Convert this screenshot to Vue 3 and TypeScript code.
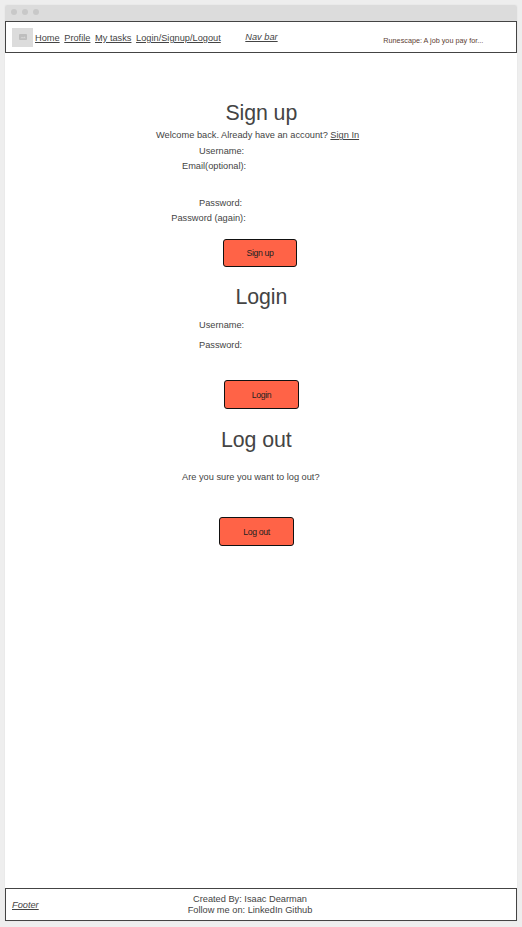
<script setup lang="ts">
const links: string[] = ['Home', 'Profile', 'My tasks', 'Login/Signup/Logout']
</script>

<template>
  <div class="window">
    <div class="chrome"><i class="dot"></i><i class="dot"></i><i class="dot"></i></div>
    <header class="navbar">
      <div class="logo">
        <svg width="8" height="6" viewBox="0 0 8 6">
          <rect width="8" height="6" rx="1" fill="#bebebe" />
          <path d="M1.2 4.3L3 2.8L4.2 3.5L5.5 2.5L6.8 4.3Z" fill="#d6d6d6" />
        </svg>
      </div>
      <nav class="links">
        <a v-for="link in links" :key="link">{{ link }}</a>
      </nav>
      <em class="nav-title">Nav bar</em>
      <span class="tagline">Runescape: A job you pay for...</span>
    </header>

    <main class="content">
      <section class="signup">
        <h1>Sign up</h1>
        <p class="intro">Welcome back. Already have an account? <a>Sign In</a></p>
        <p class="field username">Username:</p>
        <p class="field email">Email(optional):</p>
        <p class="field password">Password:</p>
        <p class="field again">Password (again):</p>
        <button>Sign up</button>
      </section>
      <section class="login">
        <h1>Login</h1>
        <p class="field username">Username:</p>
        <p class="field password">Password:</p>
        <button>Login</button>
      </section>
      <section class="logout">
        <h1>Log out</h1>
        <p class="question">Are you sure you want to log out?</p>
        <button>Log out</button>
      </section>
    </main>

    <footer class="footer">
      <em class="footer-title">Footer</em>
      <div class="credits">
        <p>Created By: Isaac Dearman</p>
        <p>Follow me on: LinkedIn Github</p>
      </div>
    </footer>
  </div>
</template>

<style>
body {
  background: #eeeeee;
}
</style>

<style scoped>
* {
  box-sizing: border-box;
}
.window {
  display: flex;
  flex-direction: column;
  width: 512px;
  height: 916px;
  margin: 5px 5px 6px;
  overflow: hidden;
  border-radius: 2px 2px 0 0;
  background: #fff;
  box-shadow: 0 0 1px #ccc;
  color: #444;
  font: 9.24px/12px "Liberation Sans", Arial, sans-serif;
  white-space: nowrap;
}
.chrome {
  display: flex;
  align-items: center;
  gap: 5px;
  flex: 0 0 16px;
  padding: 0 0 2px 6px;
  background: #dcdcdc;
}
.dot {
  width: 6px;
  height: 6px;
  border-radius: 50%;
  background: #c8c8c8;
}
.navbar {
  display: flex;
  flex: 0 0 32px;
  border: 1px solid #444;
}
.logo {
  display: flex;
  align-items: center;
  justify-content: center;
  width: 21px;
  height: 19px;
  margin: 6px 2px 0 6px;
  padding-bottom: 1px;
  background: #dcdcdc;
}
.links {
  display: flex;
  gap: 4.6px;
  width: 210.3px;
  padding-top: 10px;
}
a,
em {
  text-decoration: underline;
}
.nav-title {
  width: 138px;
  padding-top: 9px;
}
.tagline {
  padding-top: 13px;
  font-size: 7.26px;
  color: #5c4033;
}
.content {
  flex: 1;
}
section {
  display: flex;
  flex-direction: column;
  align-items: flex-start;
}
h1,
p {
  margin: 0;
}
h1 {
  font-size: 21.333px;
  letter-spacing: -0.08px;
  font-weight: 400;
  line-height: 24px;
}
button {
  width: 75px;
  height: 29px;
  padding: 0;
  border: 1px solid #111;
  border-radius: 3px;
  background: #ff6347;
  color: #222;
  font: 8.7px "Liberation Sans", Arial, sans-serif;
  letter-spacing: -0.33px;
}
.signup {
  padding-top: 48px;
}
.signup h1 {
  margin-left: 220.4px;
}
.intro {
  margin: 4px 0 0 151px;
}
.field.username,
.field.password {
  margin-left: 194px;
}
.signup .username {
  margin-top: 4px;
}
.field.email {
  margin: 3px 0 0 177px;
}
.signup .password {
  margin-top: 25px;
}
.field.again {
  margin: 3px 0 0 166.3px;
}
.signup button {
  width: 74px;
  height: 28px;
  margin: 15px 0 0 218px;
}
.login {
  padding-top: 18px;
}
.login h1 {
  margin-left: 230.4px;
}
.login .username {
  margin-top: 10px;
}
.login .password {
  margin-top: 8px;
}
.login button {
  margin: 29px 0 0 219px;
  padding-top: 1px;
}
.logout {
  padding-top: 19px;
}
.logout h1 {
  margin-left: 216px;
}
.question {
  margin: 19px 0 0 177px;
}
.logout button {
  margin: 34px 0 0 214px;
  padding-top: 1px;
}
.footer {
  display: flex;
  flex: 0 0 33px;
  border: 1px solid #444;
}
.footer-title {
  width: 176px;
  padding: 10px 0 0 6px;
}
.credits {
  width: 136px;
  padding-top: 5px;
  line-height: 11px;
  text-align: center;
}
</style>
